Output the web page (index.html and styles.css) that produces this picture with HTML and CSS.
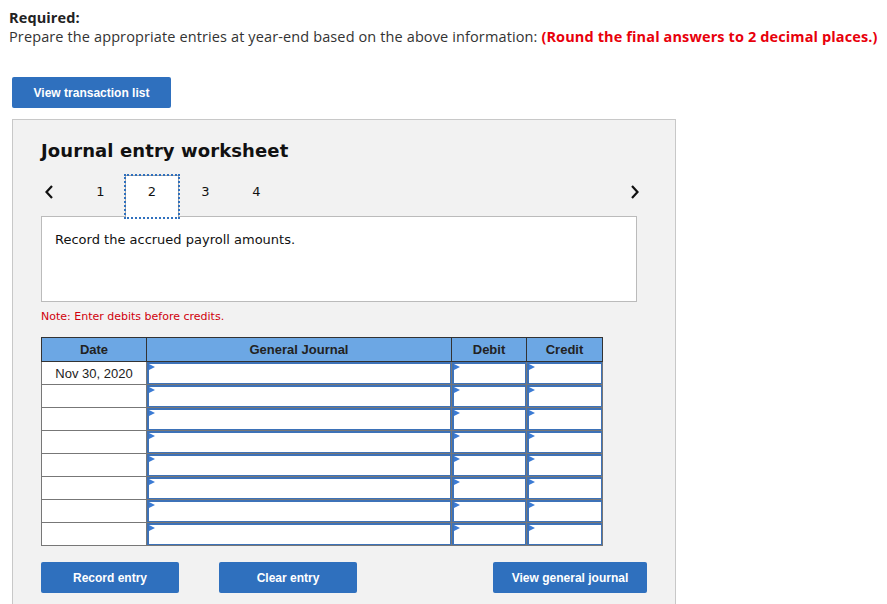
FILE: index.html
```html
<!DOCTYPE html>
<html>
<head>
<meta charset="utf-8">
<link rel="stylesheet" href="styles.css">
</head>
<body>
<div class="page">
  <div class="req">
    <div class="req-title">Required:</div>
    <div class="req-text">Prepare the appropriate entries at year-end based on the above information: <span class="red">(Round the final answers to 2 decimal places.)</span></div>
  </div>
  <button class="btn btn-list">View transaction list</button>
  <div class="panel">
    <h2 class="ws-title">Journal entry worksheet</h2>
    <div class="nav">
      <span class="chev chev-left"><svg width="10" height="16" viewBox="0 0 10 16"><path d="M8 2 L2.5 8 L8 14" fill="none" stroke="#111" stroke-width="2.2"/></svg></span>
      <span class="tab">1</span>
      <span class="tab tab-active">2</span>
      <span class="tab">3</span>
      <span class="tab">4</span>
      <span class="spacer"></span>
      <span class="chev chev-right"><svg width="10" height="16" viewBox="0 0 10 16"><path d="M2 2 L7.5 8 L2 14" fill="none" stroke="#111" stroke-width="2.2"/></svg></span>
    </div>
    <div class="desc">Record the accrued payroll amounts.</div>
    <div class="note">Note: Enter debits before credits.</div>
    <table class="journal">
      <thead>
        <tr><th class="c-date">Date</th><th class="c-gj">General Journal</th><th class="c-dr">Debit</th><th class="c-cr">Credit</th></tr>
      </thead>
      <tbody>
        <tr><td class="date">Nov 30, 2020</td><td class="in"><div class="cell"></div></td><td class="in"><div class="cell"></div></td><td class="in"><div class="cell"></div></td></tr>
        <tr><td class="date"></td><td class="in"><div class="cell"></div></td><td class="in"><div class="cell"></div></td><td class="in"><div class="cell"></div></td></tr>
        <tr><td class="date"></td><td class="in"><div class="cell"></div></td><td class="in"><div class="cell"></div></td><td class="in"><div class="cell"></div></td></tr>
        <tr><td class="date"></td><td class="in"><div class="cell"></div></td><td class="in"><div class="cell"></div></td><td class="in"><div class="cell"></div></td></tr>
        <tr><td class="date"></td><td class="in"><div class="cell"></div></td><td class="in"><div class="cell"></div></td><td class="in"><div class="cell"></div></td></tr>
        <tr><td class="date"></td><td class="in"><div class="cell"></div></td><td class="in"><div class="cell"></div></td><td class="in"><div class="cell"></div></td></tr>
        <tr><td class="date"></td><td class="in"><div class="cell"></div></td><td class="in"><div class="cell"></div></td><td class="in"><div class="cell"></div></td></tr>
        <tr><td class="date"></td><td class="in"><div class="cell"></div></td><td class="in"><div class="cell"></div></td><td class="in"><div class="cell"></div></td></tr>
      </tbody>
    </table>
    <div class="actions">
      <button class="btn btn-record">Record entry</button>
      <button class="btn btn-clear">Clear entry</button>
      <span class="spacer"></span>
      <button class="btn btn-view">View general journal</button>
    </div>
  </div>
</div>
</body>
</html>
```
FILE: styles.css
```css
html, body { margin: 0; padding: 0; background: #fff; }
body { font-family: "Open Sans", "Liberation Sans", sans-serif; color: #222; overflow: hidden; }
.page { padding: 8px 0 0 9px; }
.req { font-size: 14.5px; line-height: 19px; letter-spacing: 0.12px; }
.req-title { font-weight: 700; }
.req-text { color: #333; white-space: nowrap; }
.red { color: #e8000b; font-weight: 700; }
.btn {
  display: block; border: none; border-radius: 2px; background: #2f70be; color: #fff;
  font-family: "Liberation Sans", Arial, sans-serif; font-weight: 700; font-size: 12px;
  height: 31px; padding: 0; cursor: pointer;
}
.btn-list { margin: 31px 0 0 3px; width: 159px; }
.panel {
  margin: 11px 0 0 3px; width: 664px; height: 490px; box-sizing: border-box;
  background: #f2f2f2; border: 1px solid #c8c8c8; border-bottom: none;
  padding: 0 0 0 28px;
}
.ws-title {
  margin: 19px 0 0 0; font-family: "DejaVu Sans", Verdana, sans-serif; font-size: 18px;
  line-height: 24px; font-weight: 700; color: #111; letter-spacing: 0.1px;
}
.nav {
  display: flex; align-items: stretch; width: 595px; height: 41px; margin-top: 12px;
  font-family: "DejaVu Sans", Verdana, sans-serif; font-size: 13px; color: #111;
}
.chev { display: flex; align-items: center; padding-bottom: 8px; box-sizing: border-box; }
.chev-left { width: 33px; padding-left: 3px; }
.chev-right { width: 12px; margin-right: -6px; }
.tab { width: 51px; display: flex; align-items: center; justify-content: center; box-sizing: border-box; padding-bottom: 8px; padding-left: 2px; }
.tab-active {
  width: 54px; background: #fff; border: 1px solid #aaa; border-bottom: none; padding-left: 0; padding-bottom: 11px;
  outline: 2px dotted #2f70be; outline-offset: -1px; margin-bottom: -2px; position: relative; z-index: 1;
}
.spacer { flex: 1; }
.desc {
  width: 596px; height: 86px; box-sizing: border-box; background: #fff; border: 1px solid #bbb;
  padding: 15px 0 0 13px; font-family: "DejaVu Sans", Verdana, sans-serif; font-size: 13px; color: #111;
}
.note {
  margin-top: 8px; font-family: "DejaVu Sans", Verdana, sans-serif; font-size: 11px; line-height: 13px; color: #d0000c;
}
.journal {
  margin-top: 14px; border-collapse: collapse; width: 557px; table-layout: fixed;
  font-family: "Liberation Sans", Arial, sans-serif; font-size: 13px;
}
.journal th {
  background: #6ca7e4; border: 1px solid #333; height: 23px; padding: 0; font-weight: 700; font-size: 13px; color: #222;
}
.c-date { width: 104px; }
.c-gj { width: 304px; }
.c-dr { width: 74px; }
.c-cr { width: 75px; }
.journal td { border: 1px solid #777; padding: 0; height: 21px; background: #fff; }
.journal td.date { text-align: center; color: #222; }
.cell { position: relative; height: 19px; border: 2px solid #3d72b8; border-width: 2px 1px 1px 2px; }
.cell::before {
  content: ""; position: absolute; left: 0; top: 0; width: 0; height: 0;
  border-left: 6px solid #3b7bd4; border-top: 3px solid transparent; border-bottom: 3px solid transparent;
}
.actions { display: flex; width: 606px; margin-top: 16px; }
.btn-record { width: 138px; }
.btn-clear { width: 138px; margin-left: 40px; }
.btn-view { width: 154px; }
```
